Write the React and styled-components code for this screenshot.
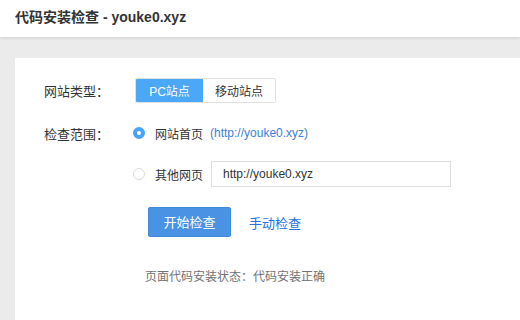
import React from 'react';
import styled, { createGlobalStyle } from 'styled-components';

const GlobalStyle = createGlobalStyle`
	html, body {
		margin: 0;
		padding: 0;
		background: #ebebeb;
		font-family: "Liberation Sans", "Noto Sans CJK SC", sans-serif;
	}
`;

const Page = styled.div`
	width: 520px;
	height: 320px;
	overflow: hidden;
	display: flex;
	flex-direction: column;
	background: #ebebeb;
`;

const Header = styled.div`
	height: 37px;
	flex-shrink: 0;
	background: #fff;
	box-shadow: 0 1px 3px rgba(0, 0, 0, 0.12);
	display: flex;
	align-items: center;
	padding-left: 15px;
	padding-bottom: 6px;
	box-sizing: border-box;
	position: relative;
	z-index: 1;
`;

const Title = styled.h1`
	margin: 0;
	font-size: 14px;
	font-weight: 700;
	color: #333;
`;

const Body = styled.div`
	flex: 1;
	padding: 21px 0 0 15px;
`;

const Card = styled.div`
	background: #fff;
	height: 100%;
	padding: 20px 0 0 29px;
	box-sizing: border-box;
	font-size: 13px;
	color: #333;
`;

const Row = styled.div`
	display: flex;
	align-items: center;
	height: ${props => props.h || 26}px;
	margin-bottom: ${props => props.mb || 0}px;
	padding-left: ${props => props.indent || 0}px;
`;

const Label = styled.div`
	width: 91px;
	flex-shrink: 0;
	color: #333;
`;

const Segmented = styled.div`
	display: flex;
	height: 25px;
	box-sizing: border-box;
	border: 1px solid #e0e0e0;
	border-radius: 2px;
	overflow: hidden;
`;

const Segment = styled.div`
	display: flex;
	align-items: center;
	justify-content: center;
	width: ${props => props.w}px;
	background: ${props => props.active ? '#4ba8f6' : '#fff'};
	color: ${props => props.active ? '#fff' : '#333'};
	font-size: 12px;
`;

const Radio = styled.span`
	width: 12px;
	height: 12px;
	border-radius: 50%;
	box-sizing: border-box;
	border: ${props => props.checked ? '4px solid #4aa4f5' : '1px solid #dcdcdc'};
	background: #fff;
	margin: 0 10px 0 -2px;
	flex-shrink: 0;
`;

const OptionText = styled.span`
	font-size: 12px;
	color: #333;
`;

const Link = styled.span`
	margin-left: 7px;
	font-size: 12px;
	color: #3b82d6;
`;

const Input = styled.div`
	margin-left: 8px;
	width: 240px;
	height: 26px;
	box-sizing: border-box;
	border: 1px solid #dedede;
	display: flex;
	align-items: center;
	padding-left: 11px;
	font-size: 12px;
	color: #333;
`;

const Button = styled.button`
	width: 83px;
	height: 30px;
	border: 1px solid #3f88dc;
	border-radius: 2px;
	background: #4a92e3;
	color: #fff;
	font-family: inherit;
	font-size: 13px;
	padding: 0 0 2px;
`;

const TextLink = styled.span`
	margin-left: 18px;
	font-size: 13px;
	color: #2173de;
`;

const Status = styled.div`
	font-size: 12px;
	color: #717171;
	padding-left: 101px;
`;

const App = () => {
	return (
		<Page>
			<GlobalStyle />
			<Header>
				<Title>代码安装检查 - youke0.xyz</Title>
			</Header>
			<Body>
				<Card>
					<Row h={25} mb={17}>
						<Label>网站类型：</Label>
						<Segmented>
							<Segment w={67} active>PC站点</Segment>
							<Segment w={72}>移动站点</Segment>
						</Segmented>
					</Row>
					<Row h={26} mb={15}>
						<Label>检查范围：</Label>
						<Radio checked />
						<OptionText>网站首页</OptionText>
						<Link>(http://youke0.xyz)</Link>
					</Row>
					<Row h={26} mb={20} indent={91}>
						<Radio />
						<OptionText>其他网页</OptionText>
						<Input>http://youke0.xyz</Input>
					</Row>
					<Row h={30} mb={30} indent={104}>
						<Button>开始检查</Button>
						<TextLink>手动检查</TextLink>
					</Row>
					<Status>页面代码安装状态：代码安装正确</Status>
				</Card>
			</Body>
		</Page>
	);
};

export default App;
